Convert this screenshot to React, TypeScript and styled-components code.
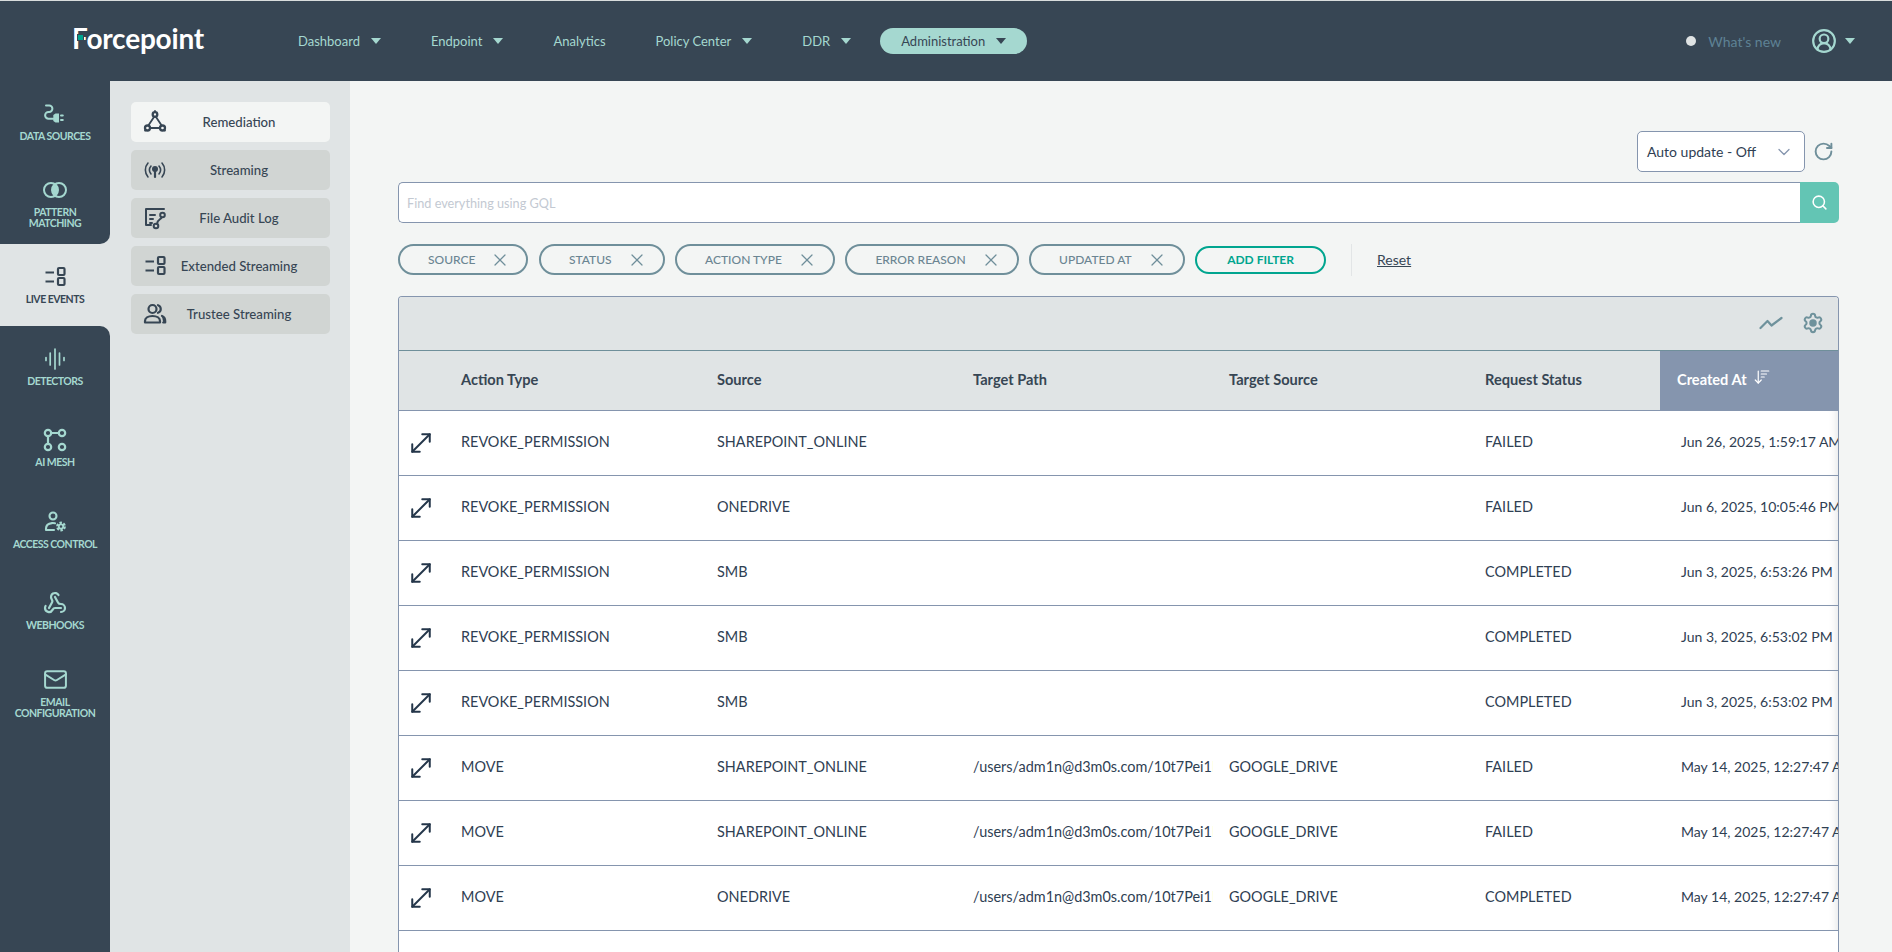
import React from "react";
import styled, { createGlobalStyle } from "styled-components";
import { ArrowDownWideNarrow, ChevronDown, CircleUserRound, Mail, MoveDiagonal, RotateCw, Search, Settings, Webhook, X } from "lucide-react";

const Global = createGlobalStyle`
  html, body { margin: 0; padding: 0; overflow: hidden; background: #f3f5f4; }
  * { box-sizing: border-box; }
  body { font-family: Lato, "Liberation Sans", sans-serif; font-size: 14px; color: #374654; }
`;

const Page = styled.div`
  width: 1892px; height: 952px; display: flex; flex-direction: column; overflow: hidden;
`;
const Header = styled.header`
  height: 81px; flex: none; display: flex; align-items: center; background: #374654;
  border-top: 1px solid #d9dddd; padding: 0 37px 0 72px;
`;
const Logo = styled.div`
  position: relative; width: 205px; font-size: 28px; font-weight: 700; color: #fff; line-height: 30px;
  margin-top: -7px; letter-spacing: -0.2px;
`;
const LogoAccent = styled.span`
  position: absolute; left: 6px; top: 12px; width: 5px; height: 5px; background: #00a58f; outline: 1px solid #374654;
`;
const Nav = styled.nav`display: flex; align-items: center; gap: 8px; font-size: 13px;`;
const NavItem = styled.div<{ $active?: boolean }>`
  display: flex; align-items: center; gap: 11px; height: 26px; padding: 0 21px; border-radius: 13px;
  color: ${p => (p.$active ? "#374654" : "#a5d8d0")};
  background: ${p => (p.$active ? "#a5d8d0" : "transparent")};
`;
const Caret = styled.span<{ $dark?: boolean }>`
  width: 0; height: 0; border-left: 5px solid transparent; border-right: 5px solid transparent;
  border-top: 6px solid ${p => (p.$dark ? "#374654" : "#a5d8d0")};
`;
const HeaderRight = styled.div`margin-left: auto; display: flex; align-items: center;`;
const Dot = styled.span`width: 10px; height: 10px; border-radius: 50%; background: #dfe3e4; margin-right: 12px;`;
const WhatsNew = styled.span`color: #5e8294; margin-right: 30px;`;
const UserIcon = styled(CircleUserRound)`color: #a5d8d0; margin-right: 8px;`;

const Body = styled.div`flex: 1; display: flex; min-height: 0;`;
const Rail = styled.aside`
  width: 110px; flex: none; display: flex; flex-direction: column; background: #e0e4e5;
`;
const RailGroup = styled.div<{ $corner: "top" | "bottom" }>`
  background: #374654; flex: ${p => (p.$corner === "top" ? 1 : "none")};
  border-${p => (p.$corner === "top" ? "top" : "bottom")}-right-radius: 10px;
`;
const RailItem = styled.div<{ $active?: boolean }>`
  height: 81.6px; display: flex; flex-direction: column; align-items: center; justify-content: center; gap: 5px;
  color: ${p => (p.$active ? "#374654" : "#a5d8d0")};
  svg { display: block; }
`;
const RailLabel = styled.span`
  font-size: 10.5px; line-height: 11px; font-weight: 700; letter-spacing: -0.5px; text-align: center;
  text-transform: uppercase; white-space: pre-line;
`;
const SubPanel = styled.div`
  width: 240px; flex: none; background: #e0e4e5; padding: 21px 20px 0 21px;
  display: flex; flex-direction: column; gap: 8px;
`;
const SubButton = styled.div<{ $active?: boolean }>`
  height: 40px; display: flex; align-items: center; padding: 0 19px 0 12px; border-radius: 5px;
  background: ${p => (p.$active ? "#f3f5f4" : "#d1d5d3")}; color: #374654; font-weight: 500; font-size: 13.2px;
  svg { flex: none; }
`;
const SubText = styled.span`flex: 1; text-align: center; white-space: nowrap; padding-bottom: 1px;`;

const Main = styled.main`flex: 1; min-width: 0; padding: 50px 53px 0 48px; display: flex; flex-direction: column;`;
const UpdateRow = styled.div`display: flex; justify-content: flex-end; align-items: center; height: 41px;`;
const UpdateSelect = styled.div`
  width: 168px; height: 41px; display: flex; align-items: center; justify-content: space-between;
  padding: 0 10px 0 9px; background: #fff; border: 1px solid #8595ae; border-radius: 5px; color: #2f4053;
  font-size: 14px; svg { color: #8595ae; }
`;
const RefreshIcon = styled(RotateCw)`color: #6f8f9a; margin: 0 5px 0 8px;`;
const SearchBar = styled.div`display: flex; height: 41px; margin-top: 10px;`;
const SearchInput = styled.input`
  flex: 1; min-width: 0; height: 41px; border: 1px solid #8595ae; border-right: 0; border-radius: 5px 0 0 5px;
  background: #fff; padding: 0 8px; font: inherit; font-size: 12.7px; outline: none;
  &::placeholder { color: #c3c9d2; opacity: 1; }
`;
const SearchButton = styled.div`
  width: 39px; display: flex; align-items: center; justify-content: center; color: #fff;
  background: #63c5b4; border-radius: 0 5px 5px 0;
`;
const FilterRow = styled.div`display: flex; align-items: center; gap: 10.5px; height: 31px; margin-top: 21px;`;
const Chip = styled.div`
  height: 31px; display: flex; align-items: center; gap: 15px; padding: 0 16px 1px 28px; border: 2px solid #6f8f9a;
  border-radius: 16px; color: #6b8592; font-size: 12px; font-weight: 500; white-space: nowrap;
  svg { color: #6f8f9a; margin-top: 1px; }
`;
const AddFilter = styled.div`
  height: 28px; display: flex; align-items: center; padding: 0 30px 1px; border: 2px solid #00a58f; border-radius: 14px;
  color: #00a58f; font-size: 12px; font-weight: 700; white-space: nowrap;
`;
const Divider = styled.span`width: 1px; height: 32px; background: #e2e5e6; margin: 0 14.5px;`;
const Reset = styled.span`color: #374654; text-decoration: underline; padding-bottom: 1px;`;

const Table = styled.div`
  margin-top: 21px; flex: 1; border: 1px solid #8595ae; border-bottom: 0; border-radius: 4px 4px 0 0;
  overflow: hidden; background: #fff;
`;
const TableTools = styled.div`
  height: 54px; display: flex; align-items: center; justify-content: flex-end; gap: 19px; padding: 0 14px 2px 0;
  background: #e0e4e5; border-bottom: 1px solid #6f8f9a; color: #6f929c;
  svg { display: block; }
  svg.gear circle { fill: currentColor; }
`;
const columns = "46px 256px 256px 256px 256px 191px 178px";
const HeadRow = styled.div`
  display: grid; grid-template-columns: ${columns}; height: 60px; background: #e0e4e5;
  border-bottom: 1px solid #8595ae;
`;
const HeadCell = styled.div`
  display: flex; align-items: center; padding: 0 0 2px 16px; font-weight: 700; font-size: 14.6px; color: #374654; white-space: nowrap;
`;
const SortedHead = styled(HeadCell)`
  padding-left: 17px; gap: 6px; background: #8595ae; color: #fff;
  svg { margin-top: -6px; }
`;
const Row = styled.div`
  display: grid; grid-template-columns: ${columns}; height: 65px; background: #fff; border-bottom: 1px solid #8595ae;
`;
const Cell = styled.div`
  display: flex; align-items: center; padding: 0 1px 3px 16px; font-size: 14.45px; color: #2f4053; white-space: nowrap; overflow: hidden;
`;
const ExpandCell = styled.div`
  display: flex; align-items: center; justify-content: center; padding-bottom: 1px; color: #24364a; margin-left: -3px;
`;
const DateCell = styled(Cell)`
  padding-left: 21px; padding-right: 0; font-size: 14px; box-shadow: inset -9px 0 8px -8px rgba(60, 70, 90, 0.16);
`;

const s = { fill: "none", stroke: "currentColor", strokeLinecap: "round" as const, strokeLinejoin: "round" as const };

const DataIcon = () => (
  <svg width="24" height="24" viewBox="0 0 24 24" {...s} strokeWidth="2">
    <path d="M3 3.500H6.200a3.200 3.200 0 0 1 0 6.400H5.500a3.400 3.400 0 0 0 0 6.800H10.500" />
    <path d="M10.300 13l2.200-1.500h3.500v9h-3.500l-2.200-1.500z" fill="currentColor" stroke="none" />
    <path d="M18 13.500h1.800M18 18h1.800" />
  </svg>
);
const PatternIcon = () => (
  <svg width="24" height="24" viewBox="0 0 24 24" {...s} strokeWidth="2">
    <path d="M12 6.500a7 7 0 0 1 0 11a7 7 0 0 1 0-11z" fill="currentColor" stroke="none" />
    <circle cx="8" cy="12" r="7" />
    <circle cx="16" cy="12" r="7" />
  </svg>
);
const RowsIcon = () => (
  <svg width="24" height="24" viewBox="0 0 24 24" {...s} strokeWidth="2.200">
    <path d="M2.500 7.500h8.500M2.500 16.500h8.500" strokeLinecap="butt" />
    <rect x="15" y="3" width="6.500" height="7" rx="1" />
    <rect x="15" y="13" width="6.500" height="7" rx="1" />
  </svg>
);
const DetectorIcon = () => (
  <svg width="24" height="24" viewBox="0 0 24 24" {...s} strokeWidth="1.700">
    <path d="M3 10.500v3M7.200 6v12M12 2v20M16.500 6v12M21 10.500v3" />
  </svg>
);
const MeshIcon = () => (
  <svg width="24" height="24" viewBox="0 0 24 24" {...s} strokeWidth="2.200">
    <circle cx="5" cy="5" r="3.200" />
    <circle cx="19" cy="5" r="3.200" />
    <circle cx="5" cy="19" r="3.200" />
    <circle cx="19" cy="19" r="3.200" />
    <path d="M8.200 5h7.600M5 8.200v7.600" />
  </svg>
);
const AccessIcon = () => (
  <svg width="24" height="24" viewBox="0 0 24 24" {...s} strokeWidth="2.100">
    <circle cx="10" cy="6" r="3.500" />
    <path d="M12 13.300c-1-.2-2-.3-3-.2-3.500.3-6 2.300-6 5.500v1.400h8" />
    <circle cx="18" cy="16.500" r="3.400" strokeWidth="3" strokeDasharray="2.200 1.360" strokeLinecap="butt" />
    <circle cx="18" cy="16.500" r="2.200" strokeWidth="1.800" />
  </svg>
);
const RemediationIcon = () => (
  <svg width="24" height="24" viewBox="0 0 24 24" {...s} strokeWidth="1.800">
    <circle cx="12" cy="4.500" r="2.300" strokeWidth="2.300" />
    <circle cx="4.500" cy="18" r="2.500" strokeWidth="2.300" />
    <circle cx="19.500" cy="18" r="2.500" strokeWidth="2.300" />
    <path d="M11 7L5.500 15.300M13 7L18.500 15.300M7 18h10M12 1v.5M2 20.500h.5M21.500 20.500h.5" />
  </svg>
);
const StreamIcon = () => (
  <svg width="24" height="24" viewBox="0 0 24 24" {...s} strokeWidth="1.600">
    <path d="M5 5c-3.500 4-3.500 10 0 14M8 8c-2 2.500-2 5.500 0 8M19 5c3.500 4 3.500 10 0 14M16 8c2 2.500 2 5.500 0 8" />
    <circle cx="12" cy="11" r="3" fill="currentColor" stroke="none" />
    <path d="M12 13v6" strokeWidth="2.200" />
  </svg>
);
const AuditIcon = () => (
  <svg width="24" height="24" viewBox="0 0 24 24" {...s} strokeWidth="2">
    <path d="M21 3H3v16h5" />
    <path d="M7 9h5M7 13h3M7 17h2" />
    <circle cx="19.500" cy="9" r="2.300" />
    <circle cx="13" cy="20" r="2.300" />
    <path d="M18.500 11.500c-.5 2-4 2-4.500 6.300" />
  </svg>
);
const TrusteeIcon = () => (
  <svg width="24" height="24" viewBox="0 0 24 24" {...s} strokeWidth="2.200">
    <circle cx="9.500" cy="7" r="4" />
    <path d="M2 20.500v-1.500c0-3 3-5 7.500-5s7.500 2 7.500 5v1.500z" />
    <path d="M15 3.200a4 4 0 0 1 0 7.600" />
    <path d="M19 14c2 .8 3.200 2.500 3.200 5v1.500h-2" fill="currentColor" />
  </svg>
);
const TrendIcon = () => (
  <svg width="24" height="24" viewBox="0 0 24 24" {...s} strokeWidth="2.200">
    <path d="M1.500 17l7-7 4 4.500L22.500 7" />
  </svg>
);

const chips = ["SOURCE", "STATUS", "ACTION TYPE", "ERROR REASON", "UPDATED AT"];
const heads = ["Action Type", "Source", "Target Path", "Target Source", "Request Status"];
const path = "/users/adm1n@d3m0s.com/10t7Pei1Hk8s2";
const rows = [
  ["REVOKE_PERMISSION", "SHAREPOINT_ONLINE", "", "", "FAILED", "Jun 26, 2025, 1:59:17 AM"],
  ["REVOKE_PERMISSION", "ONEDRIVE", "", "", "FAILED", "Jun 6, 2025, 10:05:46 PM"],
  ["REVOKE_PERMISSION", "SMB", "", "", "COMPLETED", "Jun 3, 2025, 6:53:26 PM"],
  ["REVOKE_PERMISSION", "SMB", "", "", "COMPLETED", "Jun 3, 2025, 6:53:02 PM"],
  ["REVOKE_PERMISSION", "SMB", "", "", "COMPLETED", "Jun 3, 2025, 6:53:02 PM"],
  ["MOVE", "SHAREPOINT_ONLINE", path, "GOOGLE_DRIVE", "FAILED", "May 14, 2025, 12:27:47 AM"],
  ["MOVE", "SHAREPOINT_ONLINE", path, "GOOGLE_DRIVE", "FAILED", "May 14, 2025, 12:27:47 AM"],
  ["MOVE", "ONEDRIVE", path, "GOOGLE_DRIVE", "COMPLETED", "May 14, 2025, 12:27:47 AM"],
];
const subItems: [string, React.ReactNode][] = [
  ["Remediation", <RemediationIcon key="a" />],
  ["Streaming", <StreamIcon key="b" />],
  ["File Audit Log", <AuditIcon key="c" />],
  ["Extended Streaming", <RowsIcon key="d" />],
  ["Trustee Streaming", <TrusteeIcon key="e" />],
];

export default function App() {
  return (
    <Page>
      <Global />
      <Header>
        <Logo>Forcepoint<LogoAccent /></Logo>
        <Nav>
          <NavItem>Dashboard <Caret /></NavItem>
          <NavItem>Endpoint <Caret /></NavItem>
          <NavItem>Analytics</NavItem>
          <NavItem>Policy Center <Caret /></NavItem>
          <NavItem>DDR <Caret /></NavItem>
          <NavItem $active>Administration <Caret $dark /></NavItem>
        </Nav>
        <HeaderRight>
          <Dot />
          <WhatsNew>What's new</WhatsNew>
          <UserIcon size={26} strokeWidth={2} />
          <Caret />
        </HeaderRight>
      </Header>
      <Body>
        <Rail>
          <RailGroup $corner="bottom">
            <RailItem><DataIcon /><RailLabel>Data Sources</RailLabel></RailItem>
            <RailItem><PatternIcon /><RailLabel>{"Pattern\nMatching"}</RailLabel></RailItem>
          </RailGroup>
          <RailItem $active><RowsIcon /><RailLabel>Live Events</RailLabel></RailItem>
          <RailGroup $corner="top">
            <RailItem><DetectorIcon /><RailLabel>Detectors</RailLabel></RailItem>
            <RailItem><MeshIcon /><RailLabel>AI Mesh</RailLabel></RailItem>
            <RailItem><AccessIcon /><RailLabel>Access Control</RailLabel></RailItem>
            <RailItem><Webhook size={24} strokeWidth={2.2} /><RailLabel>Webhooks</RailLabel></RailItem>
            <RailItem><Mail size={25} strokeWidth={1.9} /><RailLabel>{"Email\nConfiguration"}</RailLabel></RailItem>
          </RailGroup>
        </Rail>
        <SubPanel>
          {subItems.map(([label, icon], i) => (
            <SubButton key={label} $active={i === 0}>{icon}<SubText>{label}</SubText></SubButton>
          ))}
        </SubPanel>
        <Main>
          <UpdateRow>
            <UpdateSelect>Auto update - Off <ChevronDown size={20} strokeWidth={1.5} /></UpdateSelect>
            <RefreshIcon size={21} strokeWidth={2.2} />
          </UpdateRow>
          <SearchBar>
            <SearchInput placeholder="Find everything using GQL" readOnly />
            <SearchButton><Search size={17} strokeWidth={2.2} /></SearchButton>
          </SearchBar>
          <FilterRow>
            {chips.map(c => <Chip key={c}>{c}<X size={20} strokeWidth={1.5} /></Chip>)}
            <AddFilter>ADD FILTER</AddFilter>
            <Divider />
            <Reset>Reset</Reset>
          </FilterRow>
          <Table>
            <TableTools>
              <TrendIcon />
              <Settings className="gear" size={22} strokeWidth={2.2} />
            </TableTools>
            <HeadRow>
              <HeadCell />
              {heads.map(h => <HeadCell key={h}>{h}</HeadCell>)}
              <SortedHead>Created At <ArrowDownWideNarrow size={18} strokeWidth={1.6} /></SortedHead>
            </HeadRow>
            {rows.map((r, i) => (
              <Row key={i}>
                <ExpandCell><MoveDiagonal size={30} strokeWidth={1.6} /></ExpandCell>
                <Cell>{r[0]}</Cell>
                <Cell>{r[1]}</Cell>
                <Cell>{r[2]}</Cell>
                <Cell>{r[3]}</Cell>
                <Cell>{r[4]}</Cell>
                <DateCell>{r[5]}</DateCell>
              </Row>
            ))}
            <Row />
          </Table>
        </Main>
      </Body>
    </Page>
  );
}
